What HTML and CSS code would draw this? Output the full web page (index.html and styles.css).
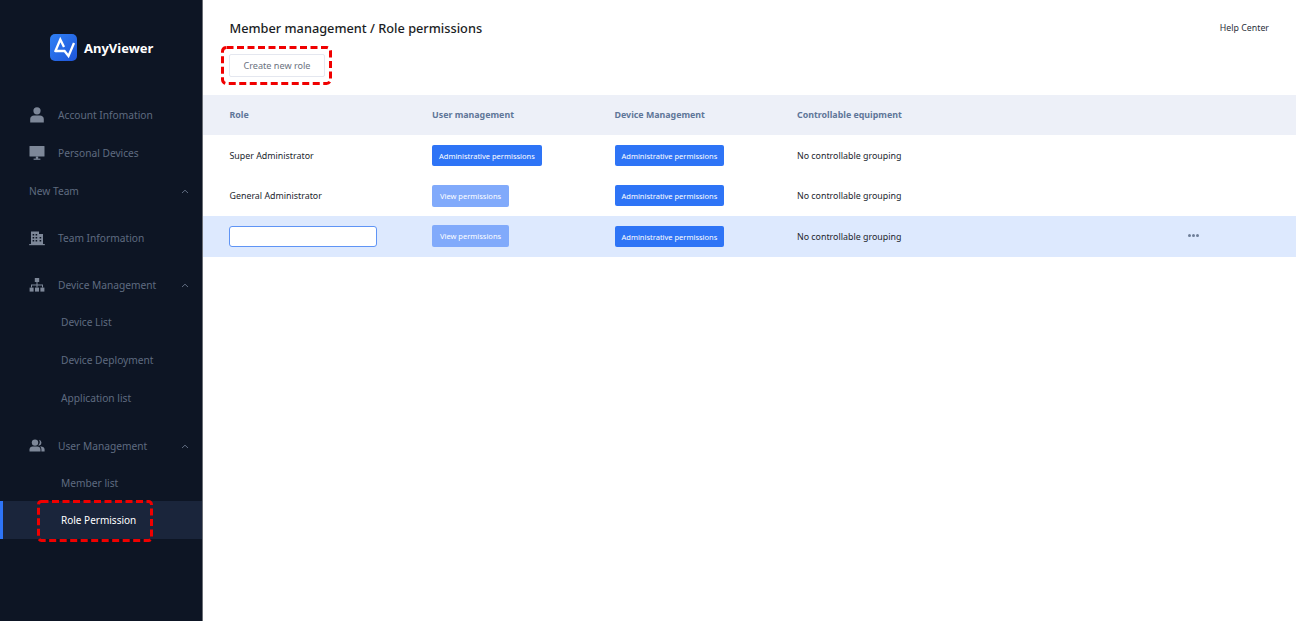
FILE: index.html
```html
<!DOCTYPE html>
<html lang="en">
<head>
    <meta charset="UTF-8">
    <meta name="viewport" content="width=device-width, initial-scale=1.0">
    <title>AnyViewer - Role permissions</title>
    <link rel="stylesheet" href="styles.css">
</head>
<body>

    <div class="container">
        <!-- Sidebar -->
        <div class="sidebar">
            <div class="logo">
                <svg class="logo-mark" width="27" height="27" viewBox="0 0 27 27">
                    <defs>
                        <linearGradient id="logoFill" x1="0" y1="0" x2="1" y2="1">
                            <stop offset="0" stop-color="#2f80f5"/>
                            <stop offset="1" stop-color="#1f55d8"/>
                        </linearGradient>
                    </defs>
                    <rect width="27" height="27" rx="5" fill="url(#logoFill)"/>
                    <path d="M5 18 L10.3 5.5 L14 13 M5.5 17 H14.5 L18.5 22 L24 9" fill="none" stroke="#fff" stroke-width="2.3" stroke-linejoin="miter"/>
                </svg>
                <span class="logo-text">AnyViewer</span>
            </div>

            <div class="menu">
                <div class="menu-item">
                    <svg class="menu-icon" width="16" height="16" viewBox="0 0 16 16"><circle cx="8" cy="3.8" r="3.6"/><path d="M1.2 15.5 V12 C1.2 9.8 3 8.6 5 8.6 H11 C13 8.6 14.8 9.8 14.8 12 V15.5 Z"/></svg>
                    <span>Account Infomation</span>
                </div>
                <div class="menu-item">
                    <svg class="menu-icon" width="16" height="16" viewBox="0 0 16 16"><rect x="0.5" y="1" width="15" height="10.5" rx="0.6"/><rect x="6.8" y="11.5" width="2.4" height="2.4"/><rect x="4.6" y="13.6" width="6.8" height="1.2"/></svg>
                    <span>Personal Devices</span>
                </div>
                <div class="menu-item group-title">
                    <span>New Team</span>
                    <svg class="chevron" width="8" height="5" viewBox="0 0 8 5"><path d="M1 4 L4 1.2 L7 4" fill="none" stroke-width="1"/></svg>
                </div>

                <div class="menu-item section">
                    <svg class="menu-icon" width="16" height="16" viewBox="0 0 16 16"><path fill-rule="evenodd" d="M2 1.5 H10 V4 H14 V14 H2 Z M3.6 4 V5.6 H5.2 V4 Z M6.6 4 V5.6 H8.2 V4 Z M3.6 7 V8.6 H5.2 V7 Z M6.6 7 V8.6 H8.2 V7 Z M10.6 7 V8.6 H12.2 V7 Z M3.6 10 V11.6 H5.2 V10 Z M6.6 10 V11.6 H8.2 V10 Z M10.6 10 V11.6 H12.2 V10 Z"/><rect x="0.2" y="14" width="15.6" height="1.2"/></svg>
                    <span>Team Information</span>
                </div>

                <div class="menu-item section">
                    <svg class="menu-icon" width="16" height="16" viewBox="0 0 16 16"><rect x="5.8" y="1" width="4.4" height="4"/><rect x="0.6" y="10.6" width="4" height="4"/><rect x="6" y="10.6" width="4" height="4"/><rect x="11.4" y="10.6" width="4" height="4"/><path d="M7.5 5 H8.5 V7.5 H14 V10.6 H13 V8.5 H8.5 V10.6 H7.5 V8.5 H3 V10.6 H2 V7.5 H7.5 Z"/></svg>
                    <span>Device Management</span>
                    <svg class="chevron" width="8" height="5" viewBox="0 0 8 5"><path d="M1 4 L4 1.2 L7 4" fill="none" stroke-width="1"/></svg>
                </div>
                <div class="menu-item sub sub-first">Device List</div>
                <div class="menu-item sub">Device Deployment</div>
                <div class="menu-item sub">Application list</div>

                <div class="menu-item section section-users">
                    <svg class="menu-icon" width="16" height="16" viewBox="0 0 16 16"><circle cx="6" cy="4.6" r="3.2"/><path d="M0.5 13.5 V11.6 C0.5 9.6 2 8.6 3.6 8.6 H8.4 C10 8.6 11.5 9.6 11.5 11.6 V13.5 Z"/><path d="M10 1.8 A3 3 0 0 1 10.4 7.6 L9.2 7.4 A4.4 4.4 0 0 0 10 1.8 Z M12.4 13.5 V11.4 C12.4 10.2 11.8 9.2 11 8.6 H12 C14 8.6 15.6 9.6 15.6 11.6 V13.5 Z"/></svg>
                    <span>User Management</span>
                    <svg class="chevron" width="8" height="5" viewBox="0 0 8 5"><path d="M1 4 L4 1.2 L7 4" fill="none" stroke-width="1"/></svg>
                </div>
                <div class="menu-item sub sub-first sub-short">Member list</div>
                <div class="menu-item sub active">Role Permission</div>
            </div>

            <svg class="mark mark-menu" width="116" height="42"><rect x="1.5" y="1.5" width="113" height="39" rx="3"/></svg>
        </div>

        <!-- Main content -->
        <div class="main">
            <div class="topbar">
                <h1>Member management / Role permissions</h1>
                <a class="help">Help Center</a>
            </div>
            <div class="toolbar">
                <button class="btn-create">Create new role</button>
            </div>
            <svg class="mark mark-create" width="111" height="39"><rect x="1.5" y="1.5" width="108" height="36" rx="4"/></svg>

            <div class="role-table">
                <div class="row head">
                    <div class="col-role">Role</div>
                    <div class="col-perm">User management</div>
                    <div class="col-perm">Device Management</div>
                    <div class="col-equip">Controllable equipment</div>
                </div>
                <div class="row">
                    <div class="col-role">Super Administrator</div>
                    <div class="col-perm"><span class="tag">Administrative permissions</span></div>
                    <div class="col-perm"><span class="tag">Administrative permissions</span></div>
                    <div class="col-equip">No controllable grouping</div>
                </div>
                <div class="row">
                    <div class="col-role">General Administrator</div>
                    <div class="col-perm"><span class="tag tag-view">View permissions</span></div>
                    <div class="col-perm"><span class="tag">Administrative permissions</span></div>
                    <div class="col-equip">No controllable grouping</div>
                </div>
                <div class="row selected">
                    <div class="col-role"><input class="role-input" type="text"></div>
                    <div class="col-perm"><span class="tag tag-view">View permissions</span></div>
                    <div class="col-perm"><span class="tag">Administrative permissions</span></div>
                    <div class="col-equip">No controllable grouping</div>
                    <div class="more"><i></i><i></i><i></i></div>
                </div>
            </div>
        </div>
    </div>

</body>
</html>
```

FILE: styles.css
```css
body {
    font-family: "Noto Sans", "Open Sans", sans-serif;
    margin: 0;
    background-color: #fff;
    overflow: hidden;
}
.container {
    display: flex;
    height: 621px;
}

/* Sidebar */
.sidebar {
    width: 202px;
    flex-shrink: 0;
    background-color: #0d1524;
    border-right: 1px solid #6b6f76;
}
.logo {
    display: flex;
    align-items: center;
    padding: 34px 0 0 50px;
    height: 27px;
}
.logo-text {
    margin-left: 7px;
    color: #fff;
    font-size: 13px;
    font-weight: 700;
}
.menu {
    margin-top: 35px;
}
.menu-item {
    display: flex;
    align-items: center;
    height: 38px;
    padding-left: 29px;
    color: #5f6b80;
    font-size: 10.2px;
}
.menu-icon {
    width: 16px;
    margin-right: 13px;
    fill: #7d8798;
}
.chevron {
    margin-left: auto;
    margin-right: 13px;
    stroke: #5f6b80;
}
.section {
    margin-top: 9px;
}
.section-users {
    margin-top: 10px;
}
.sub {
    padding-left: 61px;
}
.sub-first {
    margin-top: -1px;
}
.sub-short {
    height: 37px;
}
.active {
    background-color: #1a253b;
    color: #fff;
    font-size: 10px;
    box-shadow: inset 3px 0 0 #2e74f6;
}

/* Red dashed marks laid over the page */
.mark {
    position: absolute;
    fill: none;
    stroke: #f00000;
    stroke-width: 3;
    stroke-dasharray: 7 3.5;
}
.mark-menu {
    left: 37px;
    top: 500px;
}
.mark-create {
    left: 221px;
    top: 46px;
}

/* Main */
.main {
    flex: 1;
}
.topbar {
    display: flex;
    justify-content: space-between;
    align-items: center;
    box-sizing: border-box;
    height: 54px;
    padding: 2px 27px 0 26.5px;
}
.topbar h1 {
    margin: 0;
    color: #1a1d24;
    font-size: 12.75px;
    font-weight: 500;
}
.help {
    color: #2a2f3a;
    font-size: 8.8px;
}
.toolbar {
    height: 41px;
    padding-left: 26px;
}
.btn-create {
    display: block;
    width: 96px;
    height: 23px;
    padding: 0;
    background-color: #fff;
    border: 1px solid #e4e7ef;
    border-radius: 2px;
    color: #6b7280;
    font-family: inherit;
    font-size: 9.1px;
}

/* Role table */
.row {
    position: relative;
    display: flex;
    align-items: center;
    height: 40.5px;
    padding-left: 26px;
    color: #22262e;
    font-size: 8.85px;
}
.row .col-role,
.row .col-equip {
    padding-top: 1px;
}
.head {
    height: 40px;
    background-color: #edf0f8;
    color: #5f7699;
    font-weight: 700;
}
.col-role {
    width: 203px;
    text-indent: 0.5px;
}
.col-perm {
    width: 182.5px;
}
.row.head .col-role,
.row.head .col-equip,
.row.selected .col-role {
    padding-top: 0;
}
.selected {
    background-color: #dde9fe;
}
.tag {
    display: inline-block;
    padding: 0 7px;
    height: 21px;
    line-height: 22px;
    background-color: #2e74f6;
    border-radius: 2px;
    color: #fff;
    font-size: 7.5px;
}
.tag-view {
    padding: 0 8px;
    height: 22px;
    line-height: 23px;
    background-color: #81aafb;
}
.role-input {
    display: block;
    box-sizing: border-box;
    width: 148px;
    height: 21px;
    background-color: #fff;
    border: 1px solid #5f94f5;
    border-radius: 3px;
    outline: none;
}
.more {
    position: absolute;
    left: 985px;
    top: 18px;
    display: flex;
    gap: 1px;
}
.more i {
    width: 3px;
    height: 3px;
    background-color: #6f7f99;
    border-radius: 50%;
}
```
